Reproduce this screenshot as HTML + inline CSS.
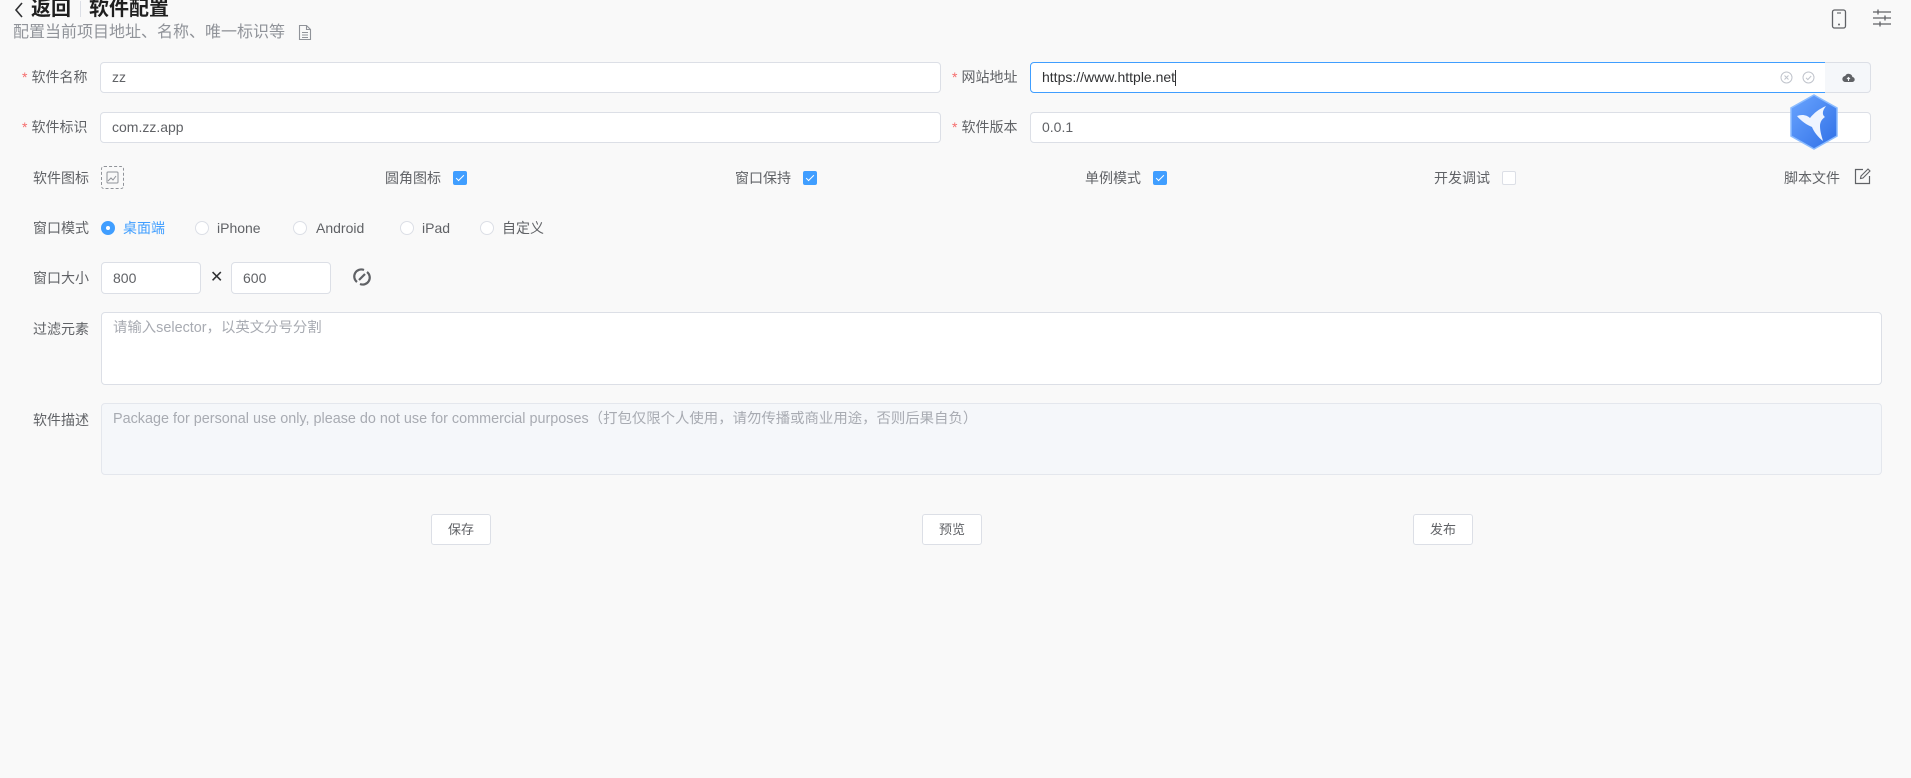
<!DOCTYPE html>
<html><head><meta charset="utf-8">
<style>
*{box-sizing:border-box;margin:0;padding:0}
html,body{width:1911px;height:778px;overflow:hidden;background:#f9f9f9;font-family:"Liberation Sans","Noto Sans CJK SC",sans-serif;color:#606266;font-size:14px}
.a{position:absolute}
.lbl{position:absolute;font-size:14px;color:#606266;line-height:20px;white-space:nowrap}
.req::before{content:"*";color:#f56c6c;margin-right:4px}
.inp{position:absolute;background:#fff;border:1px solid #dcdfe6;border-radius:4px;font-size:14px;color:#606266;padding-left:11px;line-height:29px;height:31px}
.cb{position:absolute;width:14px;height:14px;border-radius:2px;background:#409eff;border:1px solid #409eff}
.cb::after{content:"";position:absolute;left:4px;top:1px;width:3px;height:7px;border:solid #fff;border-width:0 1px 1px 0;transform:rotate(45deg)}
.cb.off{background:#fff;border-color:#dcdfe6}
.cb.off::after{display:none}
.rd{position:absolute;width:14px;height:14px;border-radius:50%;border:1px solid #dcdfe6;background:#fff}
.rd.on{background:#409eff;border-color:#409eff}
.rd.on::after{content:"";position:absolute;left:4px;top:4px;width:4px;height:4px;border-radius:50%;background:#fff}
.btn{position:absolute;height:31px;width:60px;background:#fff;border:1px solid #dcdfe6;border-radius:3px;font-size:13px;color:#606266;text-align:center;line-height:29px}
</style></head><body>

<svg class="a" style="left:13px;top:1px" width="12" height="18" viewBox="0 0 12 18"><path d="M9 2 L3 9 L9 16" fill="none" stroke="#303133" stroke-width="1.6"/></svg>
<div class="a" style="left:31px;top:-3px;font-size:20px;font-weight:bold;color:#1f1f1f;line-height:24px">返回</div>
<div class="a" style="left:80px;top:1px;width:1px;height:16px;background:#dcdfe6"></div>
<div class="a" style="left:89px;top:-3px;font-size:20px;font-weight:bold;color:#1f1f1f;line-height:24px">软件配置</div>
<div class="a" style="left:13px;top:23px;font-size:16px;color:#909399;line-height:20px;white-space:nowrap">配置当前项目地址、名称、唯一标识等</div>
<svg class="a" style="left:298px;top:24px" width="14" height="17" viewBox="0 0 14 17"><path d="M1.5 1.5h7l4 4v10h-11z M8.5 1.5v4h4 M4 8.5h6 M4 11h6 M4 13.5h6" fill="none" stroke="#909399" stroke-width="1.1"/></svg>

<svg class="a" style="left:1831px;top:9px" width="16" height="20" viewBox="0 0 16 20"><rect x="1.5" y="1" width="13" height="18" rx="2" fill="none" stroke="#606266" stroke-width="1.3"/><line x1="6" y1="4" x2="10" y2="4" stroke="#606266" stroke-width="1.1"/><circle cx="8" cy="15.5" r="1" fill="#606266"/></svg>
<svg class="a" style="left:1872px;top:9px" width="20" height="18" viewBox="0 0 20 18"><g stroke="#606266" stroke-width="1.3"><line x1="1" y1="3" x2="19" y2="3"/><line x1="1" y1="9" x2="19" y2="9"/><line x1="1" y1="15" x2="19" y2="15"/><line x1="6" y1="0.5" x2="6" y2="5.5"/><line x1="13" y1="6.5" x2="13" y2="11.5"/><line x1="8" y1="12.5" x2="8" y2="17.5"/></g></svg>

<div class="lbl req" style="left:22px;top:67px">软件名称</div>
<div class="inp" style="left:100px;top:62px;width:841px">zz</div>
<div class="lbl req" style="left:952px;top:67px">网站地址</div>
<div class="inp" style="left:1030px;top:62px;width:796px;border-color:#409eff;border-radius:4px 0 0 4px;color:#303133">https://www.httple.net<span style="display:inline-block;width:1px;height:16px;background:#303133;vertical-align:middle"></span></div>
<svg class="a" style="left:1780px;top:71px" width="13" height="13" viewBox="0 0 13 13"><circle cx="6.5" cy="6.5" r="5.5" fill="none" stroke="#c0c4cc"/><path d="M4.5 4.5l4 4M8.5 4.5l-4 4" stroke="#c0c4cc"/></svg>
<svg class="a" style="left:1802px;top:71px" width="13" height="13" viewBox="0 0 13 13"><circle cx="6.5" cy="6.5" r="5.5" fill="none" stroke="#c0c4cc"/><path d="M4 6.8l1.8 1.8 3.4-3.6" fill="none" stroke="#c0c4cc"/></svg>
<div class="a" style="left:1825px;top:62px;width:46px;height:31px;background:#f5f7fa;border:1px solid #dcdfe6;border-left:none;border-radius:0 4px 4px 0"></div>
<svg class="a" style="left:1842px;top:72px" width="13" height="11" viewBox="0 0 13 11"><path d="M3.5 10a3 3 0 0 1 -.3-6 3.8 3.8 0 0 1 7.2 1 2.5 2.5 0 0 1 -.4 5z" fill="#606266"/><path d="M6.5 9V5.5M5 7l1.5-1.5L8 7" stroke="#f5f7fa" stroke-width="1" fill="none"/></svg>

<div class="lbl req" style="left:22px;top:117px">软件标识</div>
<div class="inp" style="left:100px;top:112px;width:841px">com.zz.app</div>
<div class="lbl req" style="left:952px;top:117px">软件版本</div>
<div class="inp" style="left:1030px;top:112px;width:841px">0.0.1</div>

<svg class="a" style="left:1789px;top:94px" width="50" height="56" viewBox="0 0 50 56">
<defs><linearGradient id="g" x1="0" y1="0" x2="1" y2="1"><stop offset="0" stop-color="#6aa5ff"/><stop offset="1" stop-color="#2f6fe6"/></linearGradient></defs>
<path d="M25 1 L48 14 L48 42 L25 55 L2 42 L2 14 Z" fill="url(#g)" stroke="#8bbcff" stroke-width="1.5"/>
<path d="M8 22 C13 20 18 21 21 24 C25 19 30 15 37 12 C33 17 33 21 36 23 C33 25 31 28 31 32 C31 38 33 43 34 47 C29 43 25 38 23 33 C18 31 12 27 8 22 Z" fill="#eef4ff"/>
</svg>

<div class="lbl" style="left:33px;top:168px">软件图标</div>
<div class="a" style="left:101px;top:166px;width:23px;height:23px;border:1px dashed #909399;border-radius:3px"></div>
<svg class="a" style="left:106px;top:171px" width="13" height="13" viewBox="0 0 13 13"><rect x="1" y="1" width="11" height="11" rx="1" fill="none" stroke="#909399"/><path d="M2 10l3-3 2 2 3-4" fill="none" stroke="#909399"/></svg>
<div class="lbl" style="left:385px;top:168px">圆角图标</div><div class="cb" style="left:453px;top:171px"></div>
<div class="lbl" style="left:735px;top:168px">窗口保持</div><div class="cb" style="left:803px;top:171px"></div>
<div class="lbl" style="left:1085px;top:168px">单例模式</div><div class="cb" style="left:1153px;top:171px"></div>
<div class="lbl" style="left:1434px;top:168px">开发调试</div><div class="cb off" style="left:1502px;top:171px"></div>
<div class="lbl" style="left:1784px;top:168px">脚本文件</div>
<svg class="a" style="left:1854px;top:168px" width="17" height="17" viewBox="0 0 17 17"><path d="M9 1.5H1.5v14h14V8" fill="none" stroke="#606266" stroke-width="1.2"/><path d="M6.5 10.5l.5-2.5 7-7 2 2-7 7z" fill="none" stroke="#606266" stroke-width="1.1"/></svg>

<div class="lbl" style="left:33px;top:218px">窗口模式</div>
<div class="rd on" style="left:101px;top:221px"></div><div class="lbl" style="left:123px;top:218px;color:#409eff">桌面端</div>
<div class="rd" style="left:195px;top:221px"></div><div class="lbl" style="left:217px;top:218px">iPhone</div>
<div class="rd" style="left:293px;top:221px"></div><div class="lbl" style="left:316px;top:218px">Android</div>
<div class="rd" style="left:400px;top:221px"></div><div class="lbl" style="left:422px;top:218px">iPad</div>
<div class="rd" style="left:480px;top:221px"></div><div class="lbl" style="left:502px;top:218px">自定义</div>

<div class="lbl" style="left:33px;top:268px">窗口大小</div>
<div class="inp" style="left:101px;top:262px;width:100px;height:32px;line-height:30px">800</div>
<div class="lbl" style="left:210px;top:268px;color:#303133;font-size:16px">✕</div>
<div class="inp" style="left:231px;top:262px;width:100px;height:32px;line-height:30px">600</div>
<svg class="a" style="left:352px;top:267px" width="20" height="20" viewBox="0 0 20 20"><g fill="none" stroke="#606266" stroke-width="2.2"><path d="M5 15 A7 7 0 0 1 12 3"/><path d="M15 5 A7 7 0 0 1 8 17"/><path d="M7 13 L13 7"/></g></svg>

<div class="lbl" style="left:33px;top:319px">过滤元素</div>
<div class="a" style="left:101px;top:312px;width:1781px;height:73px;background:#fff;border:1px solid #dcdfe6;border-radius:4px;padding:5px 11px;font-size:14.4px;line-height:20px;color:#a8abb2">请输入selector，以英文分号分割</div>

<div class="lbl" style="left:33px;top:410px">软件描述</div>
<div class="a" style="left:101px;top:403px;width:1781px;height:72px;background:#f5f7fa;border:1px solid #e4e7ed;border-radius:4px;padding:5px 11px;font-size:14.4px;line-height:20px;color:#a8abb2;white-space:nowrap">Package for personal use only, please do not use for commercial purposes（打包仅限个人使用，请勿传播或商业用途，否则后果自负）</div>

<div class="btn" style="left:431px;top:514px">保存</div>
<div class="btn" style="left:922px;top:514px">预览</div>
<div class="btn" style="left:1413px;top:514px">发布</div>

</body></html>
